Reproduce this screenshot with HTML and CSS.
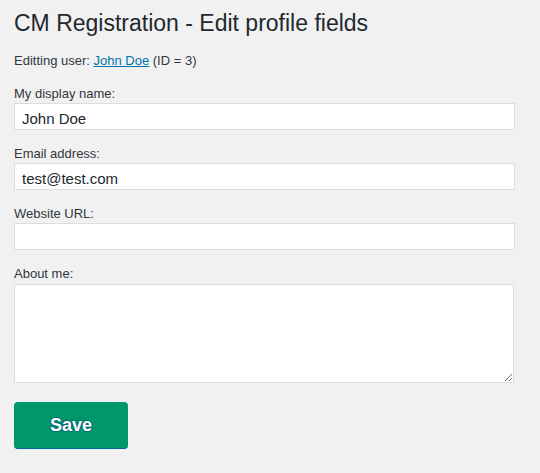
FILE: index.html
```html
<!DOCTYPE html>
<html>
<head>
<meta charset="utf-8">
<link rel="stylesheet" href="styles.css">
</head>
<body>
<div class="wrap">
  <h1 class="title">CM Registration - Edit profile fields</h1>
  <p class="info">Editting user: <a href="#" class="link">John Doe</a> (ID = 3)</p>
  <form class="form">
    <div class="field">
      <label class="label">My display name:</label>
      <input class="input" type="text" value="John Doe">
    </div>
    <div class="field">
      <label class="label">Email address:</label>
      <input class="input" type="text" value="test@test.com">
    </div>
    <div class="field">
      <label class="label">Website URL:</label>
      <input class="input" type="text" value="">
    </div>
    <div class="field">
      <label class="label">About me:</label>
      <textarea class="textarea"></textarea>
    </div>
    <button type="button" class="save">Save</button>
  </form>
</div>
</body>
</html>
```

FILE: styles.css
```css
html, body {
  margin: 0;
  padding: 0;
  background: #f1f1f1;
}
body {
  font-family: "Liberation Sans", Arial, sans-serif;
  color: #23282d;
  font-size: 13px;
}
.wrap {
  padding: 0 25px 0 14px;
}
.title {
  margin: 0;
  padding-top: 9px;
  font-size: 23px;
  font-weight: 400;
  line-height: 29px;
  color: #23282d;
}
.info {
  margin: 14px 0 0;
  line-height: 18px;
  color: #32373c;
}
.link {
  color: #0073aa;
  text-decoration: underline;
}
.form {
  display: flex;
  flex-direction: column;
  align-items: flex-start;
  margin-top: 15px;
}
.field {
  display: flex;
  flex-direction: column;
  margin-bottom: 15px;
}
.label {
  line-height: 18px;
  color: #32373c;
}
.input, .textarea {
  box-sizing: border-box;
  width: 501px;
  border: 1px solid #dddddd;
  background: #fff;
  font-family: "Liberation Sans", Arial, sans-serif;
  font-size: 15px;
  color: #23282d;
  margin: 0;
  outline: none;
}
.input {
  height: 27px;
  padding: 4px 7px 0;
}
.textarea {
  width: 500px;
  height: 99px;
  margin-top: 1px;
  resize: both;
}
.save {
  box-sizing: border-box;
  width: 114px;
  height: 47px;
  margin-top: 4px;
  background: #00986a;
  border: 0;
  border-bottom: 1px solid #006799;
  border-radius: 4px;
  color: #fff;
  font-family: "Liberation Sans", Arial, sans-serif;
  font-weight: 700;
  font-size: 18px;
  text-shadow: 0 -1px 1px #006b7a, 1px 0 1px #006b7a, 0 1px 1px #006b7a, -1px 0 1px #006b7a;
  padding: 0;
}
```
